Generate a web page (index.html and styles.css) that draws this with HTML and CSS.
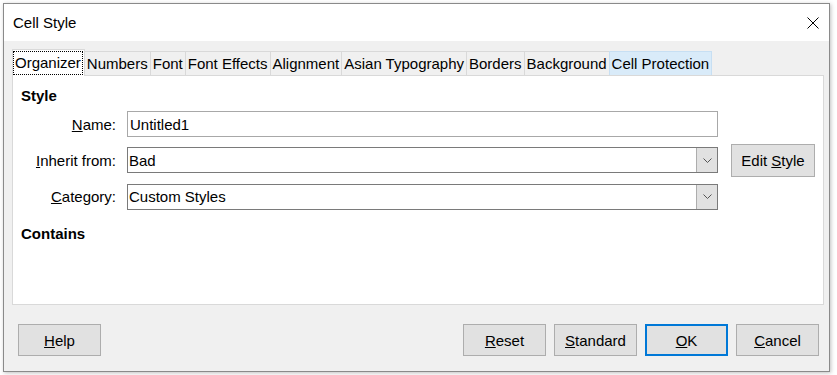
FILE: index.html
```html
<!DOCTYPE html>
<html lang="en">
<head>
  <meta charset="UTF-8">
  <title>Cell Style</title>
  <link rel="stylesheet" href="styles.css">
</head>
<body>
  <!-- Dialog window -->
  <div class="dialog">
    <div class="titlebar">
      <span class="title">Cell Style</span>
      <button class="close-btn" aria-label="Close">
        <svg width="12" height="12" viewBox="0 0 12 12">
          <path d="M0.5 0.5 L11.5 11.5 M11.5 0.5 L0.5 11.5" stroke="#000" stroke-width="1" fill="none"/>
        </svg>
      </button>
    </div>

    <div class="client">
      <!-- Tabs -->
      <div class="tabs">
        <div class="tab active"><span class="focus">Organizer</span></div>
        <div class="tab">Numbers</div>
        <div class="tab">Font</div>
        <div class="tab">Font Effects</div>
        <div class="tab">Alignment</div>
        <div class="tab">Asian Typography</div>
        <div class="tab">Borders</div>
        <div class="tab">Background</div>
        <div class="tab hover">Cell Protection</div>
      </div>

      <!-- Tab page -->
      <div class="page">
        <div class="section-title">Style</div>
        <div class="form-grid">
          <label class="field-label row-1" for="styleName"><u>N</u>ame:</label>
          <input class="text-input row-1" type="text" id="styleName" value="Untitled1">

          <label class="field-label row-2"><u>I</u>nherit from:</label>
          <div class="combo row-2">
            <span class="combo-value">Bad</span>
            <span class="combo-btn">
              <svg width="9" height="5" viewBox="0 0 9 5"><path d="M0.5 0.5 L4.5 4.5 L8.5 0.5" stroke="#555" fill="none"/></svg>
            </span>
          </div>
          <button class="btn edit-btn row-2">Edit <u>S</u>tyle</button>

          <label class="field-label row-3"><u>C</u>ategory:</label>
          <div class="combo row-3">
            <span class="combo-value">Custom Styles</span>
            <span class="combo-btn">
              <svg width="9" height="5" viewBox="0 0 9 5"><path d="M0.5 0.5 L4.5 4.5 L8.5 0.5" stroke="#555" fill="none"/></svg>
            </span>
          </div>
        </div>
        <div class="section-title contains">Contains</div>
      </div>

      <!-- Dialog buttons -->
      <div class="actions">
        <button class="btn"><u>H</u>elp</button>
        <div class="spacer"></div>
        <button class="btn"><u>R</u>eset</button>
        <button class="btn"><u>S</u>tandard</button>
        <button class="btn default"><u>O</u>K</button>
        <button class="btn"><u>C</u>ancel</button>
      </div>
    </div>
  </div>
</body>
</html>
```

FILE: styles.css
```css
body {
  margin: 0;
  background-color: #ffffff;
  font-family: 'Liberation Sans', Arial, sans-serif;
  font-size: 15px;
  color: #000000;
}
/* Window frame */
.dialog {
  margin: 3px;
  width: 827px;
  height: 369px;
  box-sizing: border-box;
  border: 1px solid #8a8a8a;
  box-shadow: 1px 1px 4px rgba(0,0,0,0.25);
  display: flex;
  flex-direction: column;
  background-color: #f0f0f0;
}
.titlebar {
  height: 37px;
  background-color: #ffffff;
  display: flex;
  align-items: center;
  justify-content: space-between;
  padding-left: 9px;
  padding-right: 10px;
  flex-shrink: 0;
}
.title {
  font-size: 15px;
}
.close-btn {
  background: none;
  border: none;
  padding: 0;
  width: 12px;
  height: 12px;
  display: flex;
}
.client {
  flex: 1;
  display: flex;
  flex-direction: column;
  padding: 8px 5px 0 8px;
}
/* Tabs */
.tabs {
  display: flex;
  align-items: flex-end;
  height: 27px;
  position: relative;
  z-index: 1;
}
.tab {
  height: 24px;
  line-height: 23px;
  padding: 0 2px;
  border: 1px solid #d9d9d9;
  border-bottom: none;
  margin-left: -1px;
  margin-bottom: 1px;
  box-sizing: border-box;
  white-space: nowrap;
  background-color: #f0f0f0;
}
.tab:first-child {
  margin-left: 0;
}
.tab.active {
  height: 27px;
  line-height: 25px;
  margin-bottom: 0;
  background-color: #ffffff;
  padding: 0 2px 0 1px;
  position: relative;
  z-index: 2;
}
.tab.hover {
  background-color: #d9ebf9;
  border-color: #c7dff3;
}
.focus {
  display: inline-block;
  outline: 1px dotted #000000;
  line-height: 22px;
  padding: 0 1px;
}
/* Tab page */
.page {
  height: 230px;
  box-sizing: border-box;
  margin-top: -1px;
  background-color: #ffffff;
  border: 1px solid #d9d9d9;
  padding: 10px 8px 0 8px;
}
.section-title {
  font-weight: bold;
  line-height: 20px;
}
.section-title.contains {
  margin-top: 14px;
}
.form-grid {
  display: grid;
  grid-template-columns: 95px 591px 84px;
  grid-template-rows: 26px 26px 27px;
  column-gap: 11px;
  row-gap: 10px;
  margin-top: 5px;
  align-items: center;
}
.row-1 { grid-row: 1; }
.row-2 { grid-row: 2; }
.row-3 { grid-row: 3; }
.field-label {
  grid-column: 1;
  text-align: right;
  white-space: nowrap;
}
.text-input,
.combo {
  grid-column: 2;
}
.text-input {
  height: 26px;
  box-sizing: border-box;
  border: 1px solid #a8a8a8;
  padding: 0 2px;
  font-family: inherit;
  font-size: 15px;
  color: #000000;
}
.combo {
  height: 26px;
  box-sizing: border-box;
  border: 1px solid #7a7a7a;
  display: flex;
  align-items: center;
  background-color: #ffffff;
}
.combo-value {
  flex: 1;
  padding-left: 1px;
  white-space: nowrap;
}
.combo-btn {
  width: 21px;
  height: 24px;
  box-sizing: border-box;
  background-color: #e1e1e1;
  border-left: 1px solid #adadad;
  display: flex;
  align-items: center;
  justify-content: center;
}
/* Buttons */
.btn {
  width: 83px;
  height: 32px;
  box-sizing: border-box;
  background-color: #e1e1e1;
  border: 1px solid #adadad;
  font-family: inherit;
  font-size: 15px;
  color: #000000;
  padding: 0;
}
.edit-btn {
  grid-column: 3;
  width: 84px;
  height: 33px;
  margin-left: 2px;
}
.btn.default {
  border: 2px solid #0078d7;
}
.actions {
  display: flex;
  gap: 8px;
  padding: 19px 5px 0 6px;
}
.spacer {
  flex: 1;
}
```
